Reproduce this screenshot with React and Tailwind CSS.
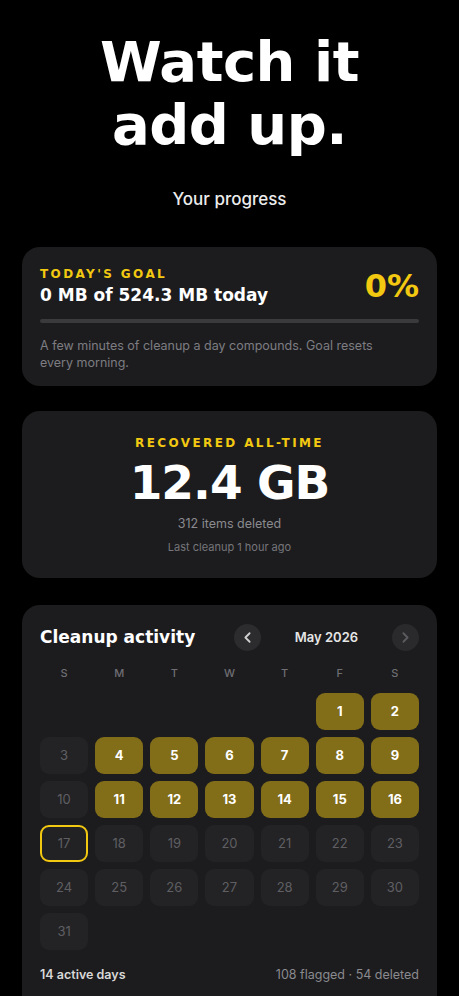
import { ChevronLeft, ChevronRight } from "lucide-react";

const wide = { fontFamily: '"DejaVu Sans", sans-serif' };

const active = new Set([1, 2, 4, 5, 6, 7, 8, 9, 11, 12, 13, 14, 15, 16]);

function DayCell({ day }) {
  if (!day) return <div className="h-[37px]" />;

  if (day === 17) {
    return (
      <div className="h-[37px] rounded-[9px] border-2 border-[#f2c811] bg-[#222224] flex items-center justify-center text-[13px] text-[#5f5f63]">
        {day}
      </div>
    );
  }

  if (active.has(day)) {
    return (
      <div className="h-[37px] rounded-[9px] bg-[#826d19] flex items-center justify-center text-[13px] font-bold text-white">
        {day}
      </div>
    );
  }

  return (
    <div className="h-[37px] rounded-[9px] bg-[#232325] flex items-center justify-center text-[13px] text-[#5f5f63]">
      {day}
    </div>
  );
}

export default function App() {
  let days = [null, null, null, null, null];
  for (let i = 1; i <= 31; i++) days.push(i);

  return (
    <div className="min-h-screen bg-black px-[22px] pt-[30px] pb-10 text-white" style={{ fontFamily: "Inter, sans-serif" }}>
      <h1 className="text-center text-[56px] font-bold leading-[63px] tracking-[-0.5px]" style={wide}>
        Watch it
        <br />
        add up.
      </h1>

      <p className="mt-[31px] text-center text-[17px] font-medium text-[#ececec]">Your progress</p>

      {/* today's goal */}
      <div className="mt-[34px] rounded-[18px] bg-[#1c1c1e] px-[18px] pt-[15px] pb-[15px]">
        <div className="flex items-center justify-between">
          <div>
            <p className="text-[12px] font-bold tracking-[2.4px] text-[#f2c811]" style={wide}>
              TODAY'S GOAL
            </p>
            <p className="mt-[1px] text-[17px] font-bold leading-[22px]" style={wide}>
              0 MB of 524.3 MB today
            </p>
          </div>
          <p className="text-[32px] font-bold text-[#f2c811]" style={wide}>
            0%
          </p>
        </div>
        <div className="mt-[9px] h-[4px] rounded-full bg-[#3a3a3c]" />
        <p className="mt-[14px] pr-[40px] text-[12.5px] leading-[17px] text-[#7d7d82]">
          A few minutes of cleanup a day compounds. Goal resets every morning.
        </p>
      </div>

      {/* all time */}
      <div className="mt-[25px] flex flex-col items-center rounded-[18px] bg-[#1c1c1e] pt-[23px] pb-[22px]">
        <p className="text-[12px] font-bold tracking-[2.4px] text-[#f2c811]" style={wide}>
          RECOVERED ALL-TIME
        </p>
        <p className="mt-[3px] text-[47px] font-bold leading-[56px] tracking-[-1px]" style={wide}>
          12.4 GB
        </p>
        <p className="mt-[4px] text-[12.5px] text-[#8a8a8f]">312 items deleted</p>
        <p className="mt-[6px] text-[11px] text-[#76767b]">Last cleanup 1 hour ago</p>
      </div>

      {/* calendar */}
      <div className="mt-[27px] rounded-[18px] bg-[#1c1c1e] px-[18px] pt-[19px] pb-[30px]">
        <div className="flex items-center justify-between">
          <p className="text-[17px] font-bold" style={wide}>
            Cleanup activity
          </p>
          <div className="flex items-center">
            <button className="flex h-[27px] w-[27px] items-center justify-center rounded-full bg-[#2c2c2e] text-[#d0d0d0]">
              <ChevronLeft size={17} strokeWidth={2.5} />
            </button>
            <span className="w-[131px] text-center text-[13px] font-semibold text-[#e6e6e6]">May 2026</span>
            <button className="flex h-[27px] w-[27px] items-center justify-center rounded-full bg-[#2a2a2c] text-[#5c5c60]">
              <ChevronRight size={17} strokeWidth={2.5} />
            </button>
          </div>
        </div>

        <div className="mt-[14px] grid grid-cols-7 gap-[7px] text-center text-[11px] font-medium text-[#6e6e73]">
          {["S", "M", "T", "W", "T", "F", "S"].map((d, i) => (
            <span key={i}>{d}</span>
          ))}
        </div>

        <div className="mt-[12px] grid grid-cols-7 gap-[7px]">
          {days.map((d, i) => (
            <DayCell key={i} day={d} />
          ))}
        </div>

        <div className="mt-[16px] flex items-center justify-between text-[12.5px]">
          <span className="font-semibold text-[#d8d8d8]">14 active days</span>
          <span className="text-[#8a8a8f]">108 flagged · 54 deleted</span>
        </div>
      </div>
    </div>
  );
}
